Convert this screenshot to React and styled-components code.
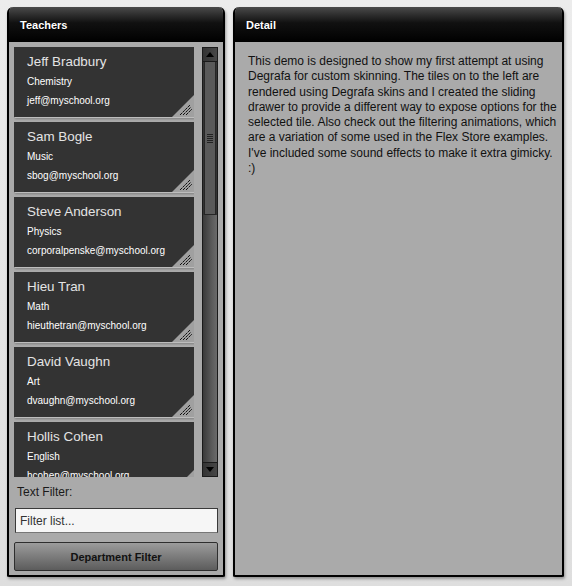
import styled, { createGlobalStyle } from "styled-components";

const teachers = [
  { name: "Jeff Bradbury", dept: "Chemistry", email: "jeff@myschool.org" },
  { name: "Sam Bogle", dept: "Music", email: "sbog@myschool.org" },
  { name: "Steve Anderson", dept: "Physics", email: "corporalpenske@myschool.org" },
  { name: "Hieu Tran", dept: "Math", email: "hieuthetran@myschool.org" },
  { name: "David Vaughn", dept: "Art", email: "dvaughn@myschool.org" },
  { name: "Hollis Cohen", dept: "English", email: "hcohen@myschool.org" },
];

const detailText =
  "This demo is designed to show my first attempt at using Degrafa for custom skinning. The tiles on to the left are rendered using Degrafa skins and I created the sliding drawer to provide a different way to expose options for the selected tile. Also check out the filtering animations, which are a variation of some used in the Flex Store examples. I've included some sound effects to make it extra gimicky. :)";

const Grip = () => (
  <svg width="22" height="22" viewBox="0 0 22 22">
    <polygon points="22,0 22,22 0,22" fill="#a0a0a0" />
    <g stroke="#111" strokeWidth="1" strokeDasharray="3 0.7">
      <line x1="8" y1="20" x2="18" y2="10" />
      <line x1="11" y1="20" x2="19" y2="12" />
      <line x1="14" y1="20" x2="20" y2="14" />
    </g>
  </svg>
);

const Arrow = ({ down }) => (
  <svg width="8" height="5" viewBox="0 0 8 5">
    <polygon points={down ? "0,0 8,0 4,5" : "0,5 8,5 4,0"} fill="#000" />
  </svg>
);

const App = () => {
  return (
    <>
      <GlobalStyle />
      <Page>
        <Panel $width={218}>
          <PanelHeader>Teachers</PanelHeader>
          <LeftBody>
            <ListArea>
              <TileList>
                {teachers.map((t) => (
                  <Tile key={t.name}>
                    <TileName>{t.name}</TileName>
                    <TileLine>{t.dept}</TileLine>
                    <TileLine>{t.email}</TileLine>
                    <GripCorner>
                      <Grip />
                    </GripCorner>
                  </Tile>
                ))}
              </TileList>
              <ScrollBar>
                <ScrollButton>
                  <Arrow />
                </ScrollButton>
                <Thumb>
                  <ThumbGrip>
                    <span />
                    <span />
                    <span />
                    <span />
                    <span />
                  </ThumbGrip>
                </Thumb>
                <Track />
                <ScrollButton>
                  <Arrow down />
                </ScrollButton>
              </ScrollBar>
            </ListArea>
            <FilterLabel>Text Filter:</FilterLabel>
            <FilterInput placeholder="Filter list..." />
            <FilterButton>Department Filter</FilterButton>
          </LeftBody>
        </Panel>
        <Panel $width={331}>
          <PanelHeader>Detail</PanelHeader>
          <DetailBody>{detailText}</DetailBody>
        </Panel>
      </Page>
    </>
  );
};
export default App;

/******************* styled component *****************/

const GlobalStyle = createGlobalStyle`
  html, body {
    margin: 0;
    padding: 0;
    background: #e9e9e9;
    font-family: "Liberation Sans", Arial, sans-serif;
  }
  * {
    box-sizing: border-box;
  }
`;

const Page = styled.main`
  display: flex;
  gap: 8px;
  padding: 7px;
  height: 586px;
  width: 572px;
  background: linear-gradient(#ececec, #dedede);
`;

const Panel = styled.section`
  width: ${(p) => p.$width}px;
  height: 570px;
  display: flex;
  flex-direction: column;
  background: #aaaaaa;
  border: 2px solid #000;
  border-top: none;
  border-radius: 6px 6px 2px 2px;
  box-shadow: 1px 2px 3px rgba(0, 0, 0, 0.35);
  overflow: hidden;
`;

const PanelHeader = styled.header`
  flex: 0 0 35px;
  margin: 0 -2px;
  padding-left: 13px;
  display: flex;
  align-items: center;
  background: linear-gradient(#4a4a4a 0%, #111 45%, #000 100%);
  border-radius: 6px 6px 0 0;
  color: #fff;
  font-size: 11px;
  font-weight: bold;
  text-shadow: 0 1px 1px rgba(0, 0, 0, 0.8);
`;

const LeftBody = styled.div`
  flex: 1;
  display: flex;
  flex-direction: column;
  padding: 5px 5px 4px 5px;
`;

const ListArea = styled.div`
  display: flex;
  gap: 8px;
  height: 430px;
`;

const TileList = styled.div`
  flex: 1;
  display: flex;
  flex-direction: column;
  gap: 5px;
  overflow: hidden;
`;

const Tile = styled.div`
  position: relative;
  flex: 0 0 70px;
  background: #333333;
  padding: 6px 0 0 13px;
  box-shadow: 1px 1px 0 #bdbdbd, 1px 2px 2px rgba(0, 0, 0, 0.25);
`;

const TileName = styled.div`
  font-size: 13.4px;
  line-height: 18px;
  color: #e4e4e4;
  margin-bottom: 1px;
`;

const TileLine = styled.div`
  font-size: 10px;
  line-height: 19px;
  color: #fff;
`;

const GripCorner = styled.div`
  position: absolute;
  right: 0;
  bottom: 0;
  width: 22px;
  height: 22px;
  line-height: 0;
`;

const ScrollBar = styled.div`
  flex: 0 0 16px;
  display: flex;
  flex-direction: column;
  border: 1px solid #1a1a1a;
  background: #333;
`;

const ScrollButton = styled.div`
  flex: 0 0 14px;
  display: flex;
  align-items: center;
  justify-content: center;
  background: linear-gradient(to right, #333, #474747);
  border-top: 1px solid #1a1a1a;
  border-bottom: 1px solid #1a1a1a;
  &:first-child {
    border-top: none;
  }
  &:last-child {
    border-bottom: none;
  }
`;

const Thumb = styled.div`
  flex: 0 0 153px;
  display: flex;
  align-items: center;
  justify-content: center;
  background: #5a5a5a;
  border: 1px solid #262626;
  border-top: none;
  margin: 0 1px;
`;

const ThumbGrip = styled.div`
  display: flex;
  flex-direction: column;
  gap: 1px;
  span {
    display: block;
    width: 6px;
    height: 1px;
    background: #222;
  }
`;

const Track = styled.div`
  flex: 1;
  background: linear-gradient(to right, #3a3a3a, #5e5e5e 70%, #6a6a6a);
`;

const FilterLabel = styled.div`
  margin: 8px 0 0 3px;
  font-size: 12px;
  line-height: 14px;
  color: #1a1a1a;
`;

const FilterInput = styled.input`
  margin: 9px 0 0 1px;
  height: 25px;
  padding: 0 4px;
  border: 1px solid #3a3a3a;
  border-bottom-color: #777;
  background: #f6f6f6;
  font-family: "Liberation Sans", Arial, sans-serif;
  font-size: 12px;
  outline: none;
  &::placeholder {
    color: #333;
  }
`;

const FilterButton = styled.button`
  margin-top: 9px;
  height: 29px;
  border: 1px solid #2e2e2e;
  border-radius: 2px;
  background: linear-gradient(#9c9c9c, #5c5c5c);
  font-family: "Liberation Sans", Arial, sans-serif;
  font-size: 11px;
  font-weight: bold;
  color: #111;
`;

const DetailBody = styled.div`
  flex: 1;
  padding: 12px 0 0 13px;
  font-size: 12px;
  line-height: 15.3px;
  color: #111;
`;
